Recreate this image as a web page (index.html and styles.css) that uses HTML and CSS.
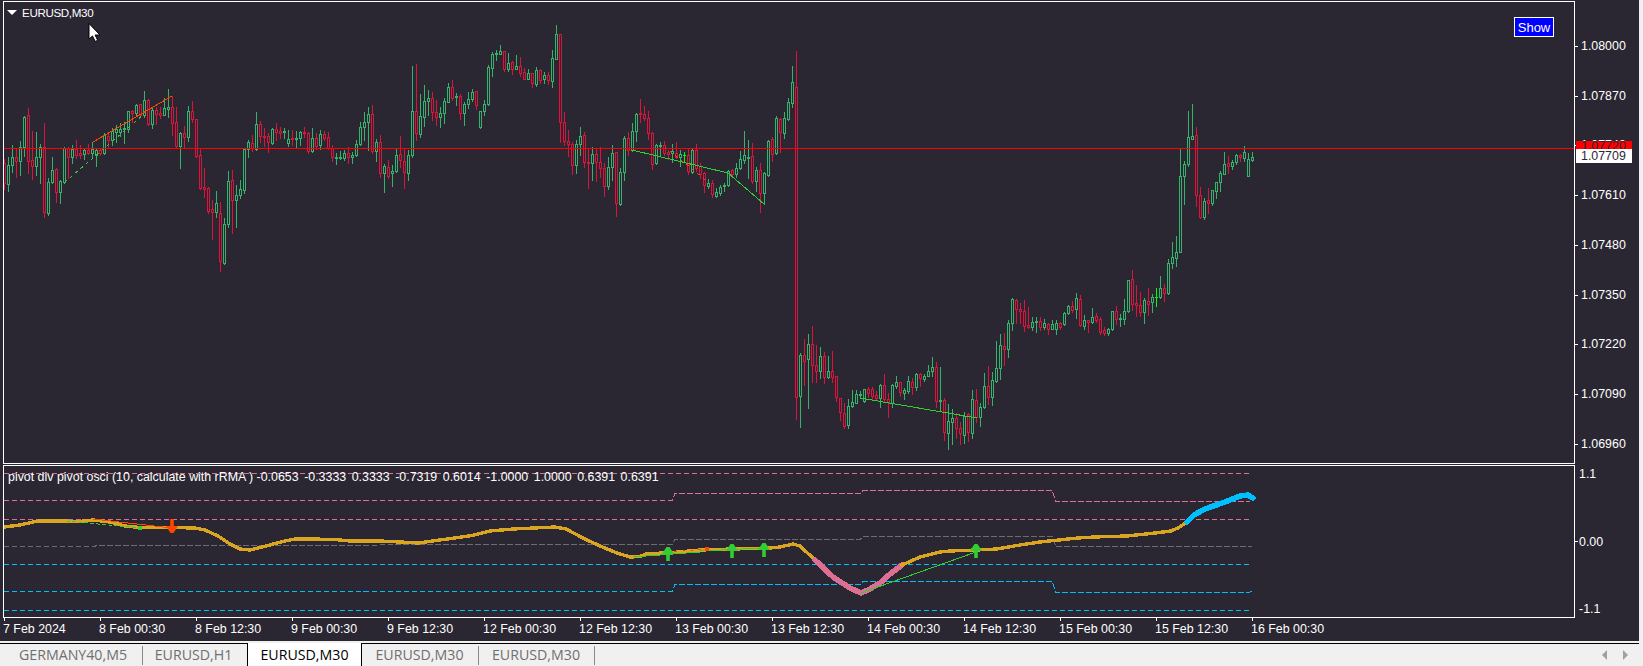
FILE: index.html
```html
<!DOCTYPE html>
<html lang="en">
<head>
<meta charset="utf-8">
<title>EURUSD,M30</title>
<link rel="stylesheet" href="styles.css">
</head>
<body>
<div class="terminal">
  <section class="panel panel-main">
    <svg id="price-chart" class="plot" viewBox="4 2 1570 461" width="1570" height="461"></svg>
    <div class="chart-title"><span class="title-arrow"></span>EURUSD,M30</div>
    <button class="show-btn" type="button">Show</button>
    <svg class="cursor" viewBox="0 0 13 19" width="13" height="19"><path d="M1 .5V16l3.5-3 2.7 5.5 2.5-1.2-2.6-5.3H12z" fill="#fff" stroke="#000"/></svg>
  </section>
  <aside class="axis axis-price">
    <div class="tick-label">1.08000</div>
    <div class="tick-label">1.07870</div>
    <div class="tick-label">1.07740</div>
    <div class="tick-label">1.07610</div>
    <div class="tick-label">1.07480</div>
    <div class="tick-label">1.07350</div>
    <div class="tick-label">1.07220</div>
    <div class="tick-label">1.07090</div>
    <div class="tick-label">1.06960</div>
    <div class="price-tag tag-red">1.07720</div>
    <div class="price-tag tag-white">1.07709</div>
  </aside>
  <section class="panel panel-indicator">
    <svg id="osc-chart" class="plot" viewBox="4 466 1570 151" width="1570" height="151"></svg>
    <div class="osc-title">pivot div pivot osci (10, calculate with rRMA ) <span class="osc-values">-0.0653 -0.3333 0.3333 -0.7319 0.6014 -1.0000 1.0000 0.6391 0.6391</span></div>
  </section>
  <aside class="axis axis-osc">
    <div class="osc-label">1.1</div>
    <div class="osc-label osc-zero">0.00</div>
    <div class="osc-label">-1.1</div>
  </aside>
  <div class="time-axis">
    <span class="time-label">7 Feb 2024</span>
    <span class="time-label">8 Feb 00:30</span>
    <span class="time-label">8 Feb 12:30</span>
    <span class="time-label">9 Feb 00:30</span>
    <span class="time-label">9 Feb 12:30</span>
    <span class="time-label">12 Feb 00:30</span>
    <span class="time-label">12 Feb 12:30</span>
    <span class="time-label">13 Feb 00:30</span>
    <span class="time-label">13 Feb 12:30</span>
    <span class="time-label">14 Feb 00:30</span>
    <span class="time-label">14 Feb 12:30</span>
    <span class="time-label">15 Feb 00:30</span>
    <span class="time-label">15 Feb 12:30</span>
    <span class="time-label">16 Feb 00:30</span>
  </div>
</div>
<nav class="tabbar">
  <div class="tabstrip">
    <div class="tab tab-1 has-sep">GERMANY40,M5</div>
    <div class="tab tab-2">EURUSD,H1</div>
    <div class="tab tab-active">EURUSD,M30</div>
    <div class="tab tab-4 has-sep">EURUSD,M30</div>
    <div class="tab tab-5 has-sep">EURUSD,M30</div>
    <div class="tab-arrows">
      <svg viewBox="0 0 7 12" width="7" height="12"><path d="M6 1v10L1 6z" fill="#a0a0a0"/></svg>
      <svg viewBox="0 0 7 12" width="7" height="12"><path d="M1 1v10l5-5z" fill="#a0a0a0"/></svg>
    </div>
  </div>
</nav>
<script src="chart.js"></script>
</body>
</html>
```

FILE: styles.css
```css
* { box-sizing: border-box; }

html, body {
  margin: 0;
  padding: 0;
  height: 666px;
  overflow: hidden;
  background: #f0f0f0;
  font-family: "Liberation Sans", Arial, sans-serif;
}

.terminal {
  width: 1639px;
  height: 641px;
  background: #2b2732;
  padding: 1px 0 0 3px;
  display: grid;
  grid-template-columns: 1572px 64px;
  grid-template-rows: 463px 153px 23px;
  row-gap: 0;
  color: #fff;
  font-size: 12.4px;
}

.panel {
  position: relative;
  border: 1px solid #fff;
  overflow: hidden;
}

.panel-main { grid-column: 1; grid-row: 1; margin-bottom: 0; }
.panel-indicator { grid-column: 1; grid-row: 2; margin-top: 1px; height: 153px; }

.plot { display: block; }

.chart-title {
  position: absolute;
  left: 3px;
  top: 2px;
  height: 16px;
  display: flex;
  align-items: center;
  font-size: 11.6px;
  letter-spacing: -0.35px;
}

.title-arrow {
  width: 0;
  height: 0;
  margin-right: 5px;
  border-left: 5px solid transparent;
  border-right: 5px solid transparent;
  border-top: 5px solid #fff;
}

.show-btn {
  position: absolute;
  left: 1510px;
  top: 15px;
  width: 40px;
  height: 20px;
  padding: 0;
  background: #0000ff;
  border: 1px solid #fff;
  color: #fff;
  font: 13px "Liberation Sans", Arial, sans-serif;
}

.cursor {
  position: absolute;
  left: 84px;
  top: 21px;
}

.osc-title {
  position: absolute;
  left: 4px;
  top: 4px;
  line-height: 14px;
  white-space: nowrap;
  font-size: 12.4px;
}

.osc-values { word-spacing: 2.1px; }

.axis { position: relative; }

.axis-price {
  grid-column: 2;
  grid-row: 1;
  padding: 38px 0 0 6px;
  display: flex;
  flex-direction: column;
  gap: 35.72px;
}

.tick-label {
  position: relative;
  line-height: 14px;
  height: 14px;
}

.tick-label::before {
  content: "";
  position: absolute;
  left: -6px;
  top: 7px;
  width: 3px;
  height: 1px;
  background: #fff;
}

.price-tag {
  position: absolute;
  left: 1px;
  width: 56px;
  padding-left: 5px;
  color: #2b2732;
  overflow: hidden;
}

.tag-red {
  top: 140px;
  height: 8px;
  line-height: 10px;
  background: #ff0000;
}

.tag-white {
  top: 148px;
  height: 14px;
  line-height: 14px;
  background: #fff;
}

.axis-osc {
  grid-column: 2;
  grid-row: 2;
  padding: 3px 0 0 4px;
  display: flex;
  flex-direction: column;
  gap: 53.6px;
}

.osc-label {
  position: relative;
  line-height: 14px;
  height: 14px;
}

.osc-zero::before {
  content: "";
  position: absolute;
  left: -4px;
  top: 6px;
  width: 3px;
  height: 1px;
  background: #fff;
}

.time-axis {
  grid-column: 1 / -1;
  grid-row: 3;
  display: flex;
  margin-top: 1px;
}

.time-label {
  position: relative;
  flex: 0 0 96px;
  padding-top: 4px;
  line-height: 14px;
  white-space: nowrap;
}

.time-label::before {
  content: "";
  position: absolute;
  left: 1px;
  top: 0;
  width: 1px;
  height: 3px;
  background: #fff;
}

.tabbar {
  height: 25px;
  padding-top: 2px;
  background: #f0f0f0;
}

.tabstrip {
  position: relative;
  display: flex;
  width: 1639px;
  height: 23px;
  border-top: 1px solid #000;
  font-family: "Open Sans", "Liberation Sans", sans-serif;
  font-size: 14.2px;
  color: #6f6f6f;
}

.tab {
  position: relative;
  display: flex;
  align-items: center;
  justify-content: center;
  height: 22px;
  padding-bottom: 1px;
  white-space: nowrap;
}

.tab-1 { width: 143px; padding-left: 3px; }
.tab-2 { width: 104px; padding-right: 3px; }
.tab-4 { width: 117px; padding-right: 2px; }
.tab-5 { width: 116px; padding-right: 2px; }

.tab-active {
  width: 115px;
  height: 23px;
  margin-top: -1px;
  background: #fff;
  border-left: 1px solid #000;
  border-right: 1px solid #000;
  color: #000;
}

.has-sep::after {
  content: "";
  position: absolute;
  right: 0;
  top: 2px;
  width: 1px;
  height: 19px;
  background: #8a8a8a;
}

.tab-arrows {
  margin-left: auto;
  width: 38px;
  padding-right: 10px;
  display: flex;
  align-items: center;
  justify-content: space-between;
  height: 22px;
  box-sizing: border-box;
}
```

FILE: chart.js
```js
var BG = '#2b2732', GREEN = '#35b36c', RED = '#dc143c', LIME = '#00ff00';
var DIV_GREEN = '#32cd32', DIV_RED = '#ff4500', PINK = '#db7093', GREY = '#6e6a70', CYAN = '#00bfff', GOLD = '#daa520';

var candles = [
['r',159,163,183,189],['g',157,165,184,191],['g',145,157,165,172],['r',148,157,161,177],['g',141,147,161,175],
['g',116,117,147,156],['r',108,115,161,173],['r',131,160,166,179],['g',132,157,166,175],['g',144,147,157,183],
['r',123,147,212,217],['g',178,182,213,215],['g',157,170,182,183],['r',168,169,192,202],['g',180,181,192,203],
['g',147,148,182,183],['r',147,148,157,178],['g',145,149,157,163],['r',140,149,155,158],['r',145,153,155,158],
['g',148,150,154,159],['r',144,150,153,154],['g',142,149,153,157],['g',149,150,155,166],['r',149,150,153,155],
['g',133,135,153,154],['r',133,136,140,147],['g',128,131,140,145],['g',125,129,132,142],['g',123,129,132,136],
['g',122,128,129,143],['g',111,111,129,132],['r',110,111,113,122],['g',104,105,113,115],['r',104,104,115,117],
['g',91,100,115,117],['r',99,100,124,125],['g',108,110,124,128],['r',107,110,114,124],['r',107,113,115,118],
['g',98,108,115,115],['g',89,107,109,117],['r',96,107,123,135],['r',107,122,146,148],['g',132,133,146,168],
['r',126,133,137,148],['g',106,111,137,141],['r',101,111,119,122],['r',119,119,156,157],['r',148,155,188,189],
['r',168,187,189,197],['r',187,188,211,213],['r',200,209,212,239],['g',191,203,212,217],['r',202,213,261,271],
['g',218,224,263,264],['g',171,181,224,227],['r',170,180,200,233],['g',185,195,200,227],['g',180,189,195,198],
['g',148,149,190,193],['g',140,142,149,157],['r',135,143,148,151],['g',112,124,149,150],['r',121,124,136,142],
['r',128,136,137,146],['r',133,136,142,152],['g',128,129,143,144],['r',123,129,132,140],['r',127,131,133,138],
['g',128,131,132,138],['g',130,139,143,146],['r',130,138,139,145],['g',131,138,139,147],['g',131,132,138,145],
['r',127,132,133,137],['r',132,133,151,153],['g',128,138,151,152],['r',133,138,146,149],['g',130,134,145,149],
['r',131,134,138,140],['r',132,137,148,149],['r',145,148,157,161],['g',153,157,158,164],['g',151,157,158,159],
['g',150,153,158,160],['r',147,153,157,163],['g',152,155,157,163],['g',140,144,155,156],['g',122,127,144,145],
['g',112,122,127,140],['g',107,114,122,150],['r',105,114,151,153],['g',139,142,151,161],['r',135,142,173,177],
['g',164,166,173,192],['r',160,167,176,178],['g',165,171,173,186],['g',148,155,171,172],['r',136,154,160,167],
['r',148,161,172,188],['g',150,155,173,180],['g',66,111,155,157],['r',64,111,133,140],['g',94,116,134,137],
['g',85,101,117,126],['g',90,98,101,115],['r',92,98,112,120],['r',100,112,117,125],['g',107,113,117,127],
['g',98,101,113,123],['g',83,87,102,102],['r',80,87,98,100],['g',93,96,97,105],['r',94,96,113,119],
['g',102,104,113,125],['g',92,99,104,108],['g',89,92,99,101],['r',91,91,105,109],['g',111,111,127,128],
['g',100,104,111,115],['g',65,67,104,105],['g',52,54,68,76],['g',50,53,54,60],['g',45,51,54,54],
['r',51,51,69,71],['g',53,63,69,71],['r',61,62,69,74],['g',55,66,69,69],['r',57,66,73,76],
['r',68,72,79,79],['g',69,73,79,79],['r',73,73,83,87],['g',67,70,84,86],['r',69,70,80,83],
['g',72,75,79,83],['r',72,75,80,84],['g',50,58,81,87],['g',25,34,59,59],['r',34,34,122,142],
['r',112,122,141,145],['r',130,141,144,156],['r',142,144,165,174],['g',140,144,165,173],['g',127,136,144,155],
['r',132,135,162,167],['r',148,162,163,188],['g',147,154,163,180],['r',148,154,162,181],['r',147,162,168,177],
['r',163,168,186,196],['g',157,167,186,189],['g',145,153,167,180],['r',152,152,203,216],['g',168,172,204,205],
['g',136,138,172,180],['r',132,138,150,155],['g',123,131,150,151],['g',113,114,131,141],['r',99,113,114,122],
['r',106,114,118,120],['r',111,118,133,139],['r',132,133,164,169],['g',144,145,163,164],['g',142,145,146,155],
['r',141,145,153,155],['r',150,152,154,159],['g',144,151,153,162],['r',142,153,157,158],['g',150,154,157,166],
['b',152,155,155,162],['r',149,155,171,174],['g',149,150,172,173],['r',144,150,168,171],['r',163,166,174,178],
['r',172,173,185,192],['g',179,183,186,188],['r',180,183,194,197],['g',188,192,196,197],['g',185,187,193,195],
['g',183,185,186,191],['g',170,171,185,186],['r',169,170,174,176],['g',163,168,174,177],['g',151,159,168,169],
['g',131,155,160,163],['g',140,157,157,178],['r',143,156,181,183],['g',167,170,181,191],['r',163,170,193,212],
['g',172,173,193,204],['g',140,141,175,176],['r',137,139,154,161],['g',116,118,153,154],['r',118,119,132,152],
['g',112,118,133,138],['g',98,102,119,120],['g',66,82,103,107],['r',51,87,397,419],['g',353,355,396,427],
['r',339,355,361,385],['g',334,344,359,408],['r',326,344,365,382],['r',345,365,371,382],['g',347,356,371,378],
['r',352,356,377,383],['g',356,371,377,378],['r',351,371,377,382],['r',376,376,397,401],['r',398,398,412,420],
['r',403,413,426,428],['g',399,406,425,428],['g',390,402,406,407],['g',390,394,403,403],['g',391,394,395,398],
['g',389,389,401,402],['r',387,389,393,397],['r',387,389,396,399],['r',391,395,398,399],['g',384,385,398,407],
['r',374,385,399,401],['r',393,399,402,417],['g',384,385,403,407],['g',376,382,386,388],['r',382,382,392,396],
['g',388,390,393,399],['g',376,381,391,393],['r',378,382,387,394],['g',373,374,387,390],['r',373,374,378,386],
['g',374,376,379,381],['g',365,371,376,376],['g',357,367,371,376],['r',362,367,401,407],['g',367,400,401,410],
['r',398,400,432,440],['g',404,421,433,449],['g',409,418,422,444],['r',413,418,428,438],['r',422,428,433,444],
['g',412,416,435,443],['r',413,414,432,441],['g',390,399,433,438],['r',389,400,417,422],['g',403,407,417,426],
['g',373,386,407,408],['r',366,386,397,404],['g',372,380,397,405],['g',341,368,381,382],['g',334,345,368,379],
['r',333,346,349,365],['g',320,323,349,357],['g',298,299,323,330],['r',299,300,309,323],['r',303,309,311,323],
['r',300,311,326,331],['r',307,325,327,328],['g',317,322,327,330],['g',317,321,322,332],['r',317,321,327,330],
['g',319,323,327,329],['r',323,324,329,334],['g',320,324,329,329],['g',320,323,329,334],['r',322,323,327,329],
['g',312,313,324,325],['g',305,306,313,314],['r',301,306,310,312],['g',293,298,309,318],['r',295,299,325,326],
['g',315,320,326,329],['r',320,320,322,332],['g',308,317,322,323],['r',313,316,320,322],['r',317,319,332,334],
['r',327,330,333,335],['g',328,329,333,335],['g',311,311,329,330],['r',306,311,319,324],['g',314,318,319,326],
['g',299,311,319,324],['g',280,280,311,312],['r',270,279,304,310],['r',285,303,305,316],['r',292,305,312,316],
['g',298,300,312,323],['r',288,301,304,315],['g',294,297,302,312],['b',288,297,297,306],['g',276,288,297,298],
['r',284,288,293,301],['g',259,263,293,294],['g',242,257,263,268],['g',236,252,258,266],['g',149,176,252,252],
['g',161,164,176,204],['g',111,137,164,166],['g',104,136,139,139],['r',127,135,195,206],['r',187,195,217,218],
['g',198,201,217,219],['r',188,200,203,213],['g',190,190,203,205],['g',182,182,191,198],['g',171,173,182,191],
['g',152,164,174,174],['r',156,163,166,173],['g',160,162,166,169],['g',154,155,162,164],['r',154,155,157,161],
['g',146,152,158,161],['g',153,159,176,176],['g',152,157,160,161]
];

function line(x1, y1, x2, y2, color, w, dash) {
  return '<line x1="' + x1 + '" y1="' + y1 + '" x2="' + x2 + '" y2="' + y2 + '" stroke="' + color + '" stroke-width="' + (w || 1) + '"' +
    (dash ? ' stroke-dasharray="' + dash + '"' : '') + ' shape-rendering="crispEdges"/>';
}

function poly(points, color, w, dash) {
  var d = points.map(function (p) { return p[0] + ',' + p[1]; }).join(' ');
  return '<polyline points="' + d + '" fill="none" stroke="' + color + '" stroke-width="' + w + '" stroke-linejoin="round" stroke-linecap="round"' +
    (dash ? ' stroke-dasharray="' + dash + '"' : '') + ' shape-rendering="crispEdges"/>';
}

var main = '';
candles.forEach(function (c, i) {
  var x = 4 * (i + 1);
  var color = c[0] === 'g' ? GREEN : c[0] === 'r' ? RED : LIME;
  main += line(x + 0.5, c[1], x + 0.5, c[4] + 1, color);
  if (c[0] === 'b') {
    main += line(x - 1, c[2] + 0.5, x + 2, c[2] + 0.5, color);
  } else {
    main += '<rect x="' + (x - 0.5) + '" y="' + (c[2] + 0.5) + '" width="2" height="' + Math.max(c[3] - c[2], 1) +
      '" fill="' + BG + '" stroke="' + color + '" shape-rendering="crispEdges"/>';
  }
});
main += poly([[93, 142], [172, 96]], DIV_RED, 1);
main += poly([[65, 182], [143, 115]], DIV_GREEN, 1, '2 5');
main += poly([[665, 147], [708, 182]], DIV_RED, 1, '2 5');
main += poly([[632, 150], [728, 173]], DIV_GREEN, 1);
main += poly([[728, 173], [764, 204]], DIV_GREEN, 1);
main += poly([[860, 398], [977, 418]], DIV_GREEN, 1);
main += line(4, 148.5, 1574, 148.5, '#ff0000');
document.getElementById('price-chart').innerHTML = main;

function upArrow(x, top) {
  return '<path d="M' + (x - 1.5) + ' ' + top + 'h3l4.5 7h-4.2v7h-3.6v-7h-4.2z" fill="' + DIV_GREEN + '"/>';
}

var gold1 = [[4,527],[20,525],[33,522],[40,521],[60,521],[80,521.5],[93,520],[110,522],[125,526],[140,527.5],[170,527.5],[195,528],[205,530],[218,536],[230,544],[240,549],[250,550],[262,547],[285,541],[295,539],[310,539],[335,539.5],[350,541],[380,541],[400,542],[419,543],[440,540],[472,535.5],[490,531],[513,529],[555,527],[566,529],[585,539],[600,546],[617,553],[630,557],[640,556.5],[647,553.5],[667,553],[700,550],[733,549],[770,548],[780,547],[793,544],[800,546],[815,560]];
var pinkSeg = [[815,560],[833,577],[850,588],[861,593],[868,590],[880,583],[890,574],[902,565]];
var gold2 = [[902,565],[920,557],[940,552],[950,551],[976,550],[997,549],[1020,545],[1040,542],[1059,540],[1078,538],[1094,537],[1127,536],[1155,533],[1171,531],[1178,528],[1187,522]];
var blueSeg = [[1187,522],[1194,515],[1205,509],[1225,502],[1240,496],[1248,495],[1253,498]];

var osc = '';
var DASH = '5 3';
osc += line(4, 473.5, 1250, 473.5, PINK, 1, DASH);
osc += poly([[4,500.5],[672,500.5],[675,493.5],[860,493.5],[863,490.5],[1052,490.5],[1056,501.5],[1250,501.5]], PINK, 1, DASH);
osc += line(4, 519.5, 1250, 519.5, PINK, 1, DASH);
osc += poly([[4,546.5],[95,546.5],[96,545.5],[672,544.5],[675,539.5],[860,539.5],[863,536.5],[1052,536.5],[1056,546.5],[1252,546.5]], GREY, 1, DASH);
osc += line(4, 564.5, 1250, 564.5, CYAN, 1, DASH);
osc += poly([[4,591.5],[672,591.5],[675,584.5],[860,584.5],[863,581.5],[1052,581.5],[1056,592.5],[1248,592.5],[1252,591.5]], CYAN, 1, DASH);
osc += line(4, 610.5, 1250, 610.5, CYAN, 1, DASH);

osc += poly(gold1, GOLD, 3.4);
osc += poly(pinkSeg, PINK, 5.5);
osc += poly(gold2, GOLD, 3.4);
osc += poly(blueSeg, CYAN, 5.5);

osc += poly([[67,521],[140,528]], DIV_GREEN, 1, '3 3');
osc += poly([[93,519],[172,528]], DIV_RED, 1);
osc += '<rect x="138" y="526" width="4" height="4" fill="' + DIV_GREEN + '"/>';
osc += '<path d="M170.2 519h3.6v7h4.2l-4.5 7h-3l-4.5-7h4.2z" fill="' + DIV_RED + '"/>';
osc += poly([[633,557],[700,552]], DIV_GREEN, 1);
osc += poly([[700,551],[763,548]], DIV_GREEN, 1);
osc += poly([[667,552],[707,549]], DIV_RED, 1, '2 6');
osc += '<rect x="705" y="547" width="4" height="4" fill="' + DIV_RED + '"/>';
osc += poly([[861,593],[976,552]], DIV_GREEN, 1);
osc += upArrow(668, 547) + upArrow(732, 544) + upArrow(764, 543) + upArrow(976, 544);
document.getElementById('osc-chart').innerHTML = osc;
```
